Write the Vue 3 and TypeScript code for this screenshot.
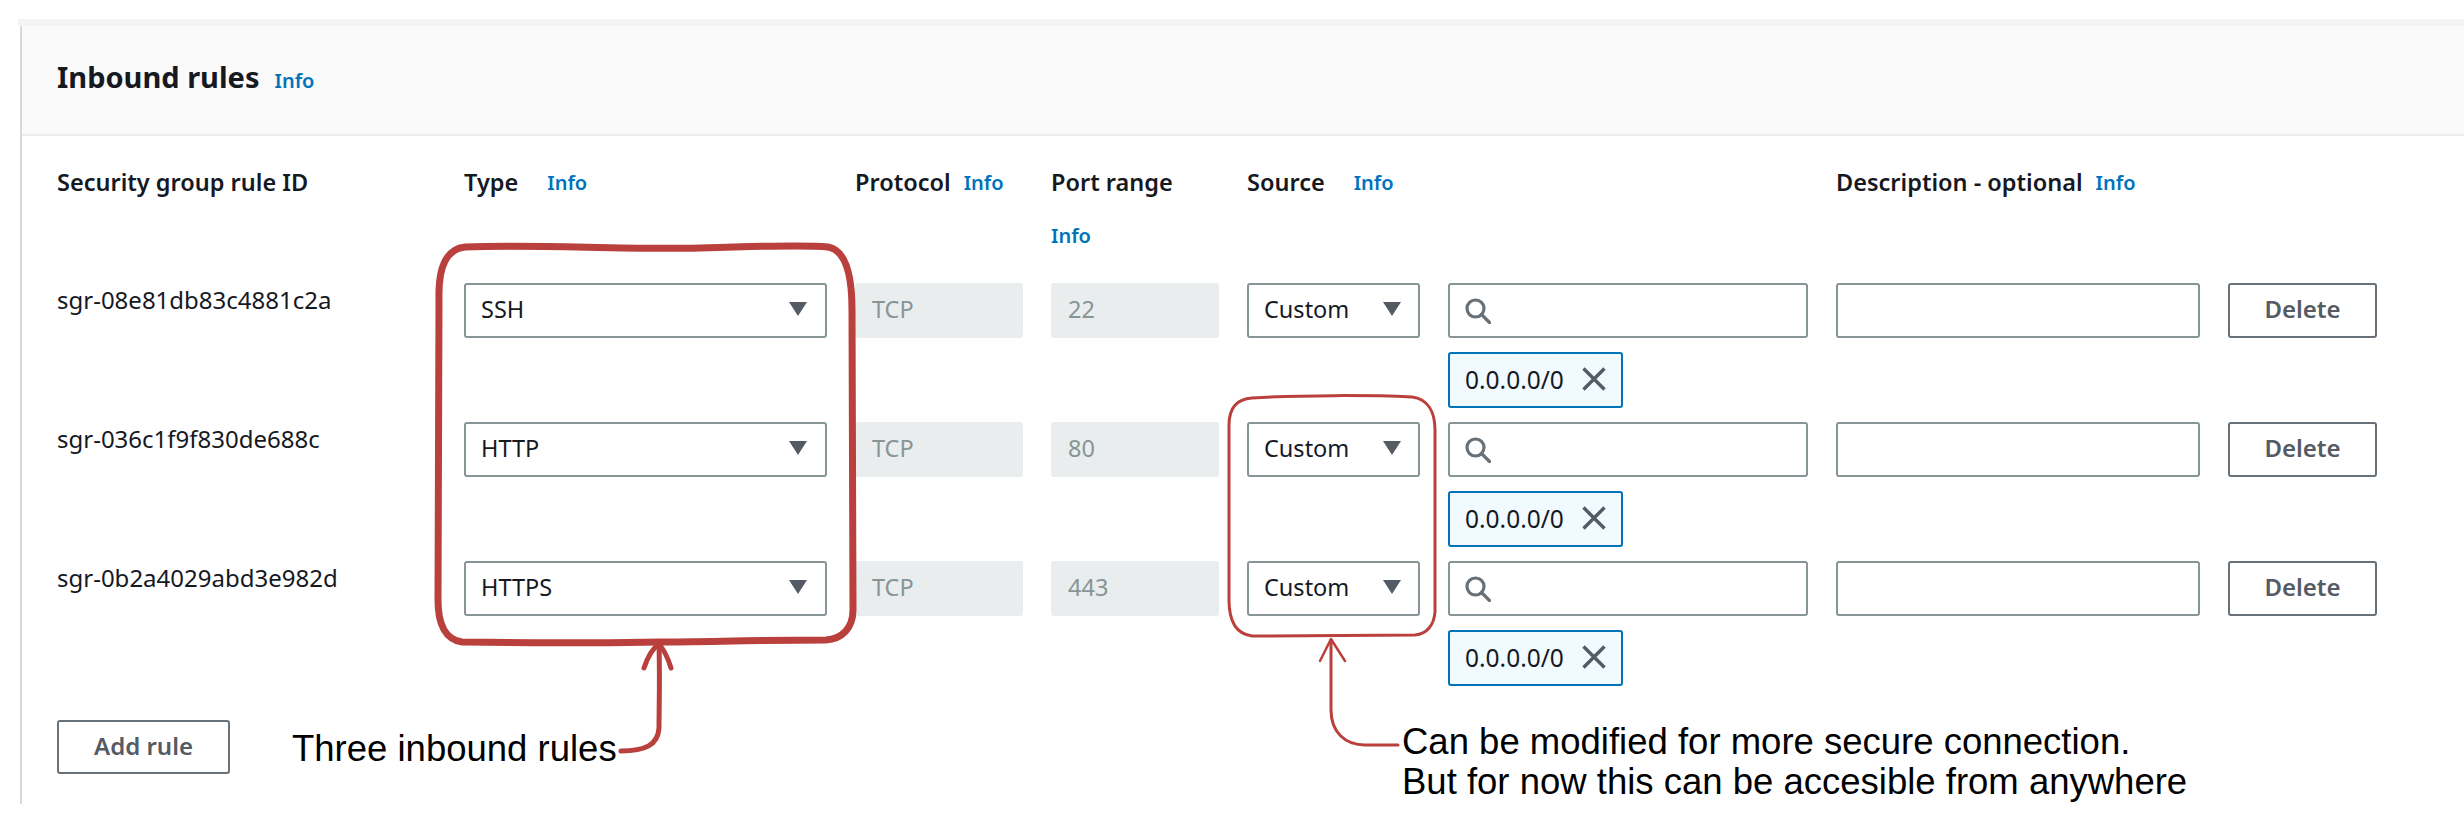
<script setup lang="ts">
interface Rule { id: string; type: string; port: string }
const rules: Rule[] = [
  { id: 'sgr-08e81db83c4881c2a', type: 'SSH', port: '22' },
  { id: 'sgr-036c1f9f830de688c', type: 'HTTP', port: '80' },
  { id: 'sgr-0b2a4029abd3e982d', type: 'HTTPS', port: '443' },
]
</script>

<template>
  <div class="page">
    <section class="card">
      <div class="card-inner">
        <header class="card-head">
          <h2>Inbound rules</h2>
          <a class="info">Info</a>
        </header>
        <div class="card-body">
          <div class="grid head-row">
            <div class="th">Security group rule ID</div>
            <div class="th"><span>Type</span><a class="info gap-l">Info</a></div>
            <div class="th"><span>Protocol</span><a class="info">Info</a></div>
            <div class="th stacked"><span>Port range</span><a class="info">Info</a></div>
            <div class="th"><span>Source</span><a class="info gap-l">Info</a></div>
            <div></div>
            <div class="th"><span>Description - optional</span><a class="info">Info</a></div>
            <div></div>
          </div>

          <div v-for="r in rules" :key="r.id" class="grid rule">
            <div class="rule-id">{{ r.id }}</div>
            <div class="field select"><span>{{ r.type }}</span><i class="caret"></i></div>
            <div class="field disabled">TCP</div>
            <div class="field disabled">{{ r.port }}</div>
            <div class="field select small"><span>Custom</span><i class="caret"></i></div>
            <div class="src">
              <div class="field search">
                <svg width="26" height="26" viewBox="0 0 26 26" fill="none" stroke="#687078" stroke-width="3.2">
                  <circle cx="10.5" cy="10.5" r="8.5" />
                  <path d="M16.5 16.5 L24.5 24.5" stroke-linecap="round" />
                </svg>
              </div>
              <div class="token">
                <span>0.0.0.0/0</span>
                <svg width="24" height="24" viewBox="0 0 24 24" fill="none" stroke="#545b64" stroke-width="3.4">
                  <path d="M1.5 1.5 L22.5 22.5 M22.5 1.5 L1.5 22.5" />
                </svg>
              </div>
            </div>
            <div class="field"></div>
            <button class="btn" type="button">Delete</button>
          </div>

          <button class="btn add" type="button">Add rule</button>
        </div>
      </div>
    </section>

    <svg class="marks" width="2464" height="827" viewBox="0 0 2464 827" fill="none" stroke="#b9403c" stroke-linecap="round" stroke-linejoin="round">
      <path stroke-width="7" d="M465 247 C540 244 620 250 700 248 C760 246 810 245 828 247 C846 250 852 275 852 310 L853 610 C853 628 842 639 826 640 C760 640 700 642 660 642 C600 643 520 643 462 642 C446 640 438 625 438 600 L439 300 C438 265 447 249 465 247 Z" />
      <path stroke-width="5" d="M659 644 C660 680 659 710 659 728 C658 745 645 751 621 751" />
      <path stroke-width="5" d="M644 668 C648 656 653 648 659 644 C664 650 668 658 671 668" />
      <path stroke-width="3" d="M1252 398 C1300 395 1370 395 1412 397 C1428 399 1435 412 1435 430 L1435 612 C1434 625 1427 634 1415 635 L1252 636 C1236 634 1229 622 1229 600 L1229 425 C1229 408 1237 399 1252 398 Z" />
      <path stroke-width="3" d="M1331 640 L1331 710 C1331 732 1345 745 1365 745 L1398 745" />
      <path stroke-width="2.5" d="M1320 661 L1331 639 L1345 661" />
    </svg>
    <div class="note note-a">Three inbound rules</div>
    <div class="note note-b">Can be modified for more secure connection.<br />But for now this can be accesible from anywhere</div>
  </div>
</template>

<style>
html, body { margin: 0; background: #fff; }
</style>

<style scoped>
.page {
  position: relative;
  width: 2464px;
  height: 827px;
  overflow: hidden;
  background: #fff;
  padding-top: 19px;
  box-sizing: border-box;
  font-family: "Noto Sans", "Open Sans", sans-serif;
  color: #16191f;
}
.card {
  margin-left: 18px;
  height: 785px;
  box-sizing: border-box;
  border-top: 7px solid #f2f3f3;
}
.card-inner {
  margin-left: 2px;
  height: 100%;
  box-sizing: border-box;
  border-left: 2px solid #d5dbdb;
}
.card-head {
  height: 110px;
  box-sizing: border-box;
  background: #fafafa;
  border-bottom: 2px solid #eaeded;
  display: flex;
  align-items: center;
  padding: 0 0 6px 35px;
  gap: 15px;
}
h2 {
  margin: 0;
  font-size: 29px;
  line-height: 36px;
  font-weight: 700;
}
.card-head .info { position: relative; top: 4px; }
.info {
  color: #0073bb;
  font-size: 20px;
  font-weight: 600;
  line-height: 26px;
  position: relative;
  top: 1px;
}
.card-body { padding: 30px 0 0 35px; }
.grid {
  display: grid;
  grid-template-columns: 379px 363px 168px 168px 173px 360px 364px 149px;
  column-gap: 28px;
  align-items: start;
}
.head-row { height: 117px; }
.th {
  display: flex;
  align-items: center;
  gap: 13px;
  font-size: 23.5px;
  line-height: 32px;
  font-weight: 600;
  white-space: nowrap;
}
.gap-l { margin-left: 16px; }
.stacked { flex-direction: column; align-items: flex-start; gap: 24px; }
.rule { height: 139px; }
.rule-id {
  font-size: 24px;
  line-height: 32px;
  padding-top: 1px;
}
.field {
  height: 55px;
  box-sizing: border-box;
  border: 2px solid #879596;
  border-radius: 3px;
  background: #fff;
  display: flex;
  align-items: center;
  padding: 0 15px 3px;
  font-size: 23.5px;
}
.select { justify-content: space-between; }
.select.small { padding-right: 14px; }
.select .caret {
  width: 0;
  height: 0;
  border-left: 9px solid transparent;
  border-right: 9px solid transparent;
  border-top: 14px solid #545b64;
  margin-right: 3px;
}
.disabled {
  background: #eaeded;
  border-color: #eaeded;
  color: #879596;
}
.search { gap: 8px; padding-bottom: 0; }
.src { display: flex; flex-direction: column; align-items: flex-start; }
.src .field { align-self: stretch; }
.token {
  margin-top: 14px;
  height: 56px;
  width: 175px;
  box-sizing: border-box;
  border: 2px solid #0073bb;
  border-radius: 3px;
  background: #f1faff;
  display: flex;
  align-items: center;
  justify-content: space-between;
  padding: 0 15px 2px 15px;
  font-size: 24.5px;
}
.btn {
  height: 55px;
  box-sizing: border-box;
  border: 2px solid #687078;
  border-radius: 3px;
  background: #fff;
  font-family: inherit;
  font-size: 24px;
  font-weight: 600;
  color: #545b64;
  padding: 0 0 4px;
}
.add {
  width: 173px;
  height: 54px;
  margin-top: 20px;
  display: block;
}
.marks { position: absolute; left: 0; top: 0; pointer-events: none; }
.note {
  position: absolute;
  font-family: "Liberation Sans", Arial, sans-serif;
  font-size: 36.5px;
  color: #000;
  white-space: nowrap;
}
.note-a { left: 292px; top: 729px; line-height: 40px; }
.note-b { left: 1402px; top: 722px; line-height: 40px; }
</style>
